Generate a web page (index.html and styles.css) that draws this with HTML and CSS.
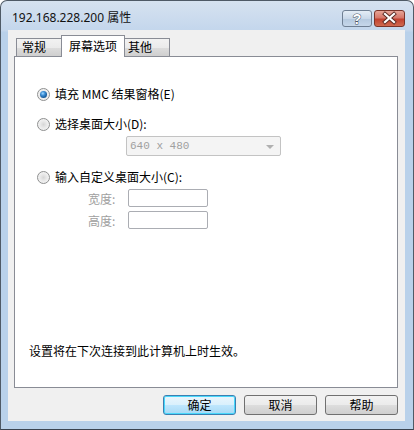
FILE: index.html
```html
<!DOCTYPE html>
<html lang="zh-CN">
<head>
<meta charset="utf-8">
<title>192.168.228.200 属性</title>
<link rel="stylesheet" href="styles.css">
</head>
<body>
<div class="window">
  <div class="titlebar">
    <span class="title">192.168.228.200 属性</span>
    <div class="caption-buttons">
      <div class="cap-btn help">
        <svg width="30" height="17" viewBox="0 0 30 17">
          <text x="15" y="13.5" text-anchor="middle" class="help-glyph">?</text>
        </svg>
      </div>
      <div class="cap-btn close">
        <svg width="31" height="17" viewBox="0 0 31 17">
          <path d="M11 4 L20 12 M20 4 L11 12" stroke="#5a2a22" stroke-width="4" stroke-linecap="square"/>
          <path d="M11 4 L20 12 M20 4 L11 12" stroke="#ffffff" stroke-width="2.2" stroke-linecap="square"/>
        </svg>
      </div>
    </div>
  </div>
  <div class="client">
    <div class="tabs">
      <div class="tab">常规</div>
      <div class="tab active">屏幕选项</div>
      <div class="tab">其他</div>
    </div>
    <div class="panel">
      <div class="option first">
        <span class="radio checked"></span>
        <span class="label">填充 MMC 结果窗格(E)</span>
      </div>
      <div class="option second">
        <span class="radio"></span>
        <span class="label">选择桌面大小(D):</span>
      </div>
      <div class="select">
        <span class="select-text">640 x 480</span>
        <span class="arrow"></span>
      </div>
      <div class="option third">
        <span class="radio"></span>
        <span class="label">输入自定义桌面大小(C):</span>
      </div>
      <div class="field first-field">
        <span class="field-label">宽度:</span>
        <span class="input"></span>
      </div>
      <div class="field">
        <span class="field-label">高度:</span>
        <span class="input"></span>
      </div>
      <div class="note">设置将在下次连接到此计算机上时生效。</div>
    </div>
    <div class="buttons">
      <div class="btn default">确定</div>
      <div class="btn">取消</div>
      <div class="btn">帮助</div>
    </div>
  </div>
</div>
</body>
</html>
```
FILE: styles.css
```css
* { box-sizing: border-box; }
html, body { margin: 0; padding: 0; background: #ffffff; }
body {
  font-family: "Noto Sans CJK SC", "Noto Sans", sans-serif;
  font-size: 12px;
  color: #000;
}
.window {
  width: 414px;
  height: 430px;
  border: 1px solid #4f5a66;
  border-bottom-color: #3a4450;
  border-radius: 7px 7px 0 0;
  background: linear-gradient(to bottom, #d6e2f0 0px, #c3d6ec 30px, #b9d1ea 31px, #b9d1ea 100%);
  display: flex;
  flex-direction: column;
  overflow: hidden;
}
.titlebar {
  height: 29px;
  display: flex;
  align-items: flex-start;
  justify-content: space-between;
  padding: 0 8px 0 11px;
}
.title {
  font-family: "Noto Sans", "Noto Sans CJK SC", sans-serif;
  font-size: 12px;
  line-height: 14px;
  margin-top: 10px;
  color: #111;
}
.caption-buttons {
  display: flex;
  gap: 2px;
  margin-top: 9px;
}
.cap-btn {
  height: 17px;
  border-radius: 3px;
  display: flex;
}
.cap-btn.help {
  width: 30px;
  border: 1px solid #6f7f93;
  background: linear-gradient(to bottom, #e4edf6 0%, #c9d8e9 50%, #b4c8de 51%, #c6d7ea 100%);
}
.cap-btn.help svg { margin: -1px; }
.help-glyph {
  font-family: "Liberation Sans", sans-serif;
  font-weight: bold;
  font-size: 14px;
  fill: #ffffff;
  stroke: #4a5666;
  stroke-width: 1;
  paint-order: stroke;
}
.cap-btn.close {
  width: 31px;
  border: 1px solid #7a3328;
  background: linear-gradient(to bottom, #e7a597 0%, #d6776a 45%, #c2412f 55%, #d06a50 100%);
}
.cap-btn.close svg { margin: -1px; }
.client {
  flex: 1;
  margin: 0 8px 8px 7px;
  background: #f0f0f0;
  display: flex;
  flex-direction: column;
  padding: 0 7px 6px 6px;
}
.tabs {
  display: flex;
  align-items: flex-end;
  height: 26px;
  padding-left: 2px;
  position: relative;
  z-index: 1;
}
.tab {
  height: 18px;
  border: 1px solid #898c95;
  border-bottom: none;
  background: linear-gradient(to bottom, #f2f2f2 0%, #ebebeb 50%, #dddddd 51%, #cfcfcf 100%);
  padding: 0 0 0 5px;
  line-height: 16px;
  font-size: 12px;
  width: 46px;
}
.tab + .tab { margin-left: -1px; }
.tab.active {
  height: 22px;
  background: #ffffff;
  width: 64px;
  margin-bottom: -1px;
  padding-left: 7px;
  line-height: 19px;
}
.tab:last-child { width: 46px; padding-left: 3px; }
.panel {
  flex: 1;
  background: #ffffff;
  border: 1px solid #898c95;
  display: flex;
  flex-direction: column;
  padding: 29px 0 28px 22px;
}
.option {
  display: flex;
  align-items: center;
  height: 16px;
}
.option.second { margin-top: 14px; }
.option.third { margin-top: 13px; }
.radio {
  width: 13px;
  height: 13px;
  border-radius: 50%;
  border: 1px solid #8e8f8f;
  background: radial-gradient(circle at 50% 50%, #d6d6d6 0px, #e8e8e8 3px, #f4f4f4 6px);
  flex: none;
  margin-right: 5px;
  position: relative;
}
.radio.checked::after {
  content: "";
  position: absolute;
  left: 2px;
  top: 2px;
  width: 7px;
  height: 7px;
  border-radius: 50%;
  background: radial-gradient(circle at 40% 35%, #9fd8ff 0px, #3d8fd6 2px, #1a5e9e 4px);
}
.label { line-height: 16px; white-space: nowrap; }
.select {
  margin: 4px 0 0 89px;
  width: 155px;
  height: 20px;
  border: 1px solid #c3c3c3;
  border-radius: 2px;
  background: #f4f4f4;
  display: flex;
  align-items: center;
  justify-content: space-between;
  padding: 0 6px 0 3px;
  color: #a0a0a0;
}
.select-text { font-family: "Liberation Mono", monospace; font-size: 11px; }
.arrow {
  width: 0;
  height: 0;
  border-left: 4px solid transparent;
  border-right: 4px solid transparent;
  border-top: 4px solid #b0b0b0;
  margin-top: 1px;
}
.field {
  display: flex;
  align-items: center;
  margin-top: 4px;
  padding-left: 51px;
  height: 18px;
}
.field-label {
  color: #a0a0a0;
  width: 40px;
}
.input {
  width: 80px;
  height: 18px;
  border: 1px solid #abadb3;
  border-radius: 2px;
  background: #ffffff;
}
.note {
  margin-top: auto;
  margin-left: -8px;
  line-height: 16px;
}
.buttons {
  display: flex;
  justify-content: flex-end;
  gap: 8px;
  margin-top: 7px;
}
.btn {
  width: 73px;
  height: 20px;
  border: 1px solid #707070;
  border-radius: 3px;
  background: linear-gradient(to bottom, #f2f2f2 0%, #ebebeb 50%, #dddddd 51%, #cfcfcf 100%);
  text-align: center;
  line-height: 18px;
  font-size: 12px;
}
.btn.default {
  border-color: #3c7fb1;
  box-shadow: inset 0 0 0 1px #48d8fb;
  background: linear-gradient(to bottom, #eaf6fd 0%, #d9f0fc 50%, #bee6fd 51%, #a7d9f5 100%);
}
```
